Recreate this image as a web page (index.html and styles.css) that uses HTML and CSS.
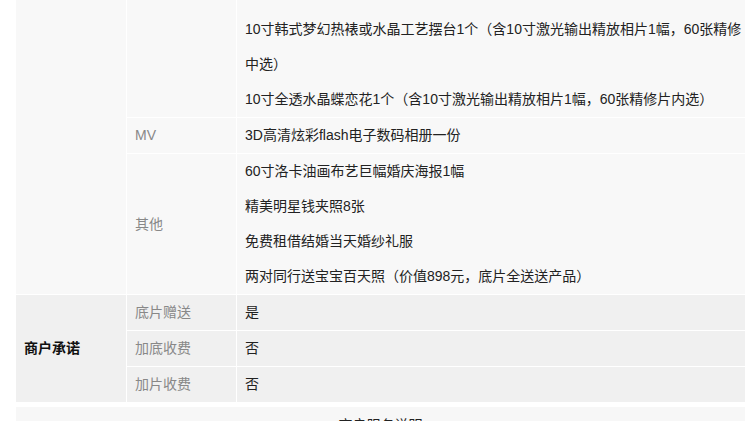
FILE: index.html
```html
<!DOCTYPE html>
<html lang="zh-CN">
<head>
<meta charset="utf-8">
<title>套系详情</title>
<link rel="stylesheet" href="styles.css">
</head>
<body>
<div class="wrap">
  <table class="detail">
    <colgroup>
      <col class="c1"><col class="c2"><col class="c3">
    </colgroup>
    <tbody class="grp-light">
      <tr>
        <td class="cat" rowspan="3"></td>
        <td class="lbl"></td>
        <td class="val first">
          <div class="ln">10寸韩式梦幻热裱或水晶工艺摆台1个（含10寸激光输出精放相片1幅，60张精修</div>
          <div class="ln">中选）</div>
          <div class="ln">10寸全透水晶蝶恋花1个（含10寸激光输出精放相片1幅，60张精修片内选）</div>
        </td>
      </tr>
      <tr>
        <td class="lbl">MV</td>
        <td class="val"><div class="ln">3D高清炫彩flash电子数码相册一份</div></td>
      </tr>
      <tr>
        <td class="lbl">其他</td>
        <td class="val">
          <div class="ln">60寸洛卡油画布艺巨幅婚庆海报1幅</div>
          <div class="ln">精美明星钱夹照8张</div>
          <div class="ln">免费租借结婚当天婚纱礼服</div>
          <div class="ln">两对同行送宝宝百天照（价值898元，底片全送送产品）</div>
        </td>
      </tr>
    </tbody>
    <tbody class="grp-dark">
      <tr>
        <td class="cat bold" rowspan="3">商户承诺</td>
        <td class="lbl">底片赠送</td>
        <td class="val"><div class="ln">是</div></td>
      </tr>
      <tr>
        <td class="lbl">加底收费</td>
        <td class="val"><div class="ln">否</div></td>
      </tr>
      <tr>
        <td class="lbl">加片收费</td>
        <td class="val"><div class="ln">否</div></td>
      </tr>
    </tbody>
  </table>
  <div class="next">
    <h3 class="next-title">商户服务说明</h3>
  </div>
</div>
</body>
</html>
```

FILE: styles.css
```css
html, body {
  margin: 0;
  padding: 0;
  background: #fff;
}
body {
  font-family: "Liberation Sans", "Noto Sans CJK SC", sans-serif;
  font-size: 14px;
  color: #222;
}
.wrap {
  margin-left: 16px;
  width: 729px;
}
.detail {
  width: 729px;
  table-layout: fixed;
  border-collapse: separate;
  border-spacing: 0;
}
.c1 { width: 110px; }
.c2 { width: 110px; }
.c3 { width: 509px; }
.detail td {
  padding: 0 0 0 8px;
  vertical-align: middle;
  border-bottom: 1px solid #fff;
  line-height: 35px;
}
.detail td.lbl,
.detail td.val {
  border-left: 1px solid #fff;
}
.grp-light td { background: #f8f8f8; }
.grp-dark td { background: #f0f0f0; }
.grp-dark tr:last-child td,
.grp-dark td.cat {
  border-bottom: 0;
}
.lbl { color: #888; }
.val { color: #222; }
.val.first { padding-top: 12px; }
.ln {
  white-space: nowrap;
  overflow: hidden;
}
.bold {
  font-weight: bold;
  color: #111;
}
.next {
  margin-top: 5px;
  background: #f7f7f7;
  padding-top: 8px;
  height: 40px;
}
.next-title {
  margin: 0;
  text-align: center;
  font-size: 14px;
  font-weight: normal;
  line-height: 20px;
  color: #222;
}
```
